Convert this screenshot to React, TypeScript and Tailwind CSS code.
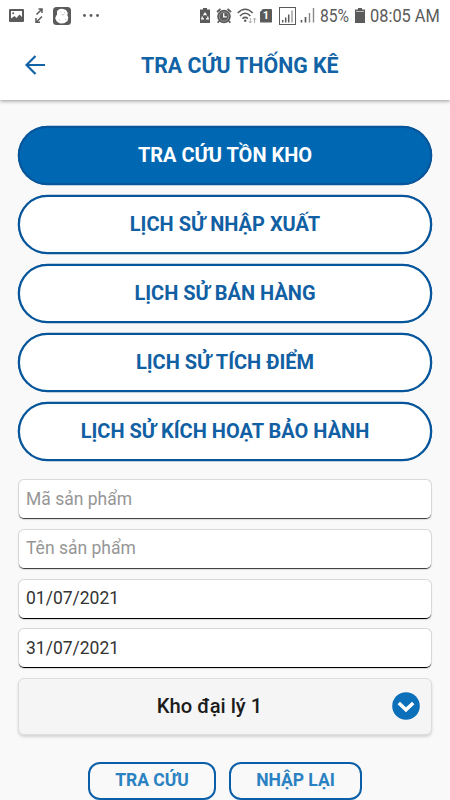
import React, { useState } from 'react';

const MENU_ITEMS = [
  'TRA CỨU TỒN KHO',
  'LỊCH SỬ NHẬP XUẤT',
  'LỊCH SỬ BÁN HÀNG',
  'LỊCH SỬ TÍCH ĐIỂM',
  'LỊCH SỬ KÍCH HOẠT BẢO HÀNH',
];

// Android status bar: notifications on the left, system icons on the right
function StatusBar() {
  return (
    <div className="flex h-[31px] items-center text-[#5b5b5b]">
      <svg className="ml-[9px] h-[13px] w-[15px] shrink-0" viewBox="0 0 15 13">
        <rect width="15" height="13" rx="1" fill="currentColor" />
        <path d="M2 2h11v6L10.5 5.5 7.5 9 5.5 7 2 9.5z" fill="#fff" />
        <circle cx="4.2" cy="4.2" r="1" fill="currentColor" />
      </svg>
      <svg className="ml-[11px] h-4 w-2 shrink-0" viewBox="0 0 8 16" fill="none" stroke="currentColor" strokeWidth="1.5">
        <path d="M1.5 6.5 7 1M3.5 1H7v4M7 8.5 1.5 14M1 10v4.2h4" />
      </svg>
      <svg className="ml-[10px] h-[18px] w-[18px] shrink-0" viewBox="0 0 18 18">
        <rect width="18" height="18" rx="3.5" fill="currentColor" />
        <path d="M4 4 6.5 2l3-.3L13 3l1.8 3-.5 2.2 1 2.3-.8 3.5-3.3 2.3-4 .2L4 14.8 2.2 11.5 3 9 4 7.7z" fill="#fff" />
        <path d="M7.5 4.8h.8M11 5.5h1M8.5 7.5q1.5 1 3-.2M6 12.5l1 .8M12 13l1-.8" fill="none" stroke="#999" strokeWidth=".6" />
      </svg>
      <svg className="ml-[12px] h-[3px] w-4 shrink-0" viewBox="0 0 16 3" fill="currentColor">
        <circle cx="1.5" cy="1.5" r="1.4" />
        <circle cx="8" cy="1.5" r="1.4" />
        <circle cx="14.5" cy="1.5" r="1.4" />
      </svg>

      <svg className="ml-[101px] h-[15px] w-[10px] shrink-0" viewBox="0 0 10 15">
        <path d="M3 0h4v1.5h3V15H0V1.5h3z" fill="currentColor" />
        <path d="m3.5 7.3 1.5-2.3 1.5 2.3M7.5 8.5l.8 2.3H6M4 10.8H1.7l.8-2.3" fill="none" stroke="#fff" strokeWidth="1.2" />
      </svg>
      <svg className="ml-[6px] h-4 w-4 shrink-0" viewBox="0 0 16 16">
        <circle cx="8" cy="8.5" r="6.8" fill="currentColor" />
        <path d="M1 4 4.5 1M15 4l-3.5-3M3 13l-1.2 1.8M13 13l1.2 1.8" stroke="currentColor" strokeWidth="1.8" />
        <circle cx="8" cy="8.5" r="4.6" fill="none" stroke="#fff" strokeWidth=".35" />
        <path d="M7.7 5.3v3.6h3" fill="none" stroke="#fff" strokeWidth="1.3" />
      </svg>
      <svg className="ml-[5px] h-[16px] w-5 shrink-0" viewBox="0 0 20 16" fill="none" stroke="currentColor" strokeWidth="1.5">
        <path d="M.7 5Q8.2-2.4 15.7 5M3 8Q8.2 2.7 13.4 8M5.5 10.6q2.7-2.4 5.4 0" />
        <circle cx="8.2" cy="12.8" r="1.2" fill="currentColor" stroke="none" />
        <path d="M13.3 10v5M11.8 13.4l1.5 1.6 1.5-1.6M17.6 15v-5M16.1 11.6l1.5-1.6 1.5 1.6" stroke="#aaa" strokeWidth="1" />
      </svg>
      <div className="ml-[3px] flex h-[14px] w-3 shrink-0 items-center justify-center rounded-[1px] bg-[#5b5b5b] text-[11px] font-bold leading-none text-white [clip-path:polygon(28%_0,100%_0,100%_100%,0_100%,0_25%)]">
        1
      </div>
      <svg className="ml-[7px] h-[18px] w-[17px] shrink-0" viewBox="0 0 17 18" fill="none" stroke="currentColor">
        <rect x=".5" y=".5" width="16" height="17" strokeWidth="1" />
        <path d="M3.7 15.5V13M6.7 15.5v-5M9.7 15.5V7.5" strokeWidth="1.5" />
        <path d="M13 15.5V3.5" strokeWidth="1.2" stroke="#888" />
      </svg>
      <svg className="ml-[4px] h-[15px] w-[15px] shrink-0" viewBox="0 0 15 15" fill="none" stroke="currentColor">
        <path d="M1.5 14.5V12M5.5 14.5V9" strokeWidth="1.7" />
        <path d="M9.5 14.5V5M13.5 14.5V0" strokeWidth="1.4" stroke="#888" />
      </svg>
      <span className="ml-[5px] w-[31px] shrink-0 origin-left scale-x-[0.87] whitespace-nowrap text-[18px] leading-none">85%</span>
      <svg className="ml-[4px] h-[15px] w-[10px] shrink-0" viewBox="0 0 10 15">
        <path d="M3 0h4v1.5h3V15H0V1.5h3z" fill="currentColor" />
        <path d="M1 3.5h8" stroke="#bbb" strokeWidth="1" />
      </svg>
      <span className="ml-[5px] shrink-0 origin-left scale-x-[0.91] whitespace-nowrap text-[18px] leading-none">08:05 AM</span>
    </div>
  );
}

function Header() {
  return (
    <header className="relative z-10 h-[100px] bg-white shadow-[0_1px_4px_rgba(0,0,0,0.4)]">
      <StatusBar />
      <div className="flex h-[69px] items-center pl-[25px]">
        <svg className="-mt-[2px] h-5 w-5 shrink-0" viewBox="0 0 20 20" fill="none" stroke="#1163a5" strokeWidth="2.2">
          <path d="M20 10H2M10.5 1 1.5 10l9 9" />
        </svg>
        <h1 className="ml-[96px] whitespace-nowrap pt-px text-[21.3px] font-bold text-[#1163a5]">TRA CỨU THỐNG KÊ</h1>
      </div>
    </header>
  );
}

interface TextFieldProps {
  value: string;
  placeholder?: string;
  onChange: (value: string) => void;
}

function TextField({ value, placeholder, onChange }: TextFieldProps) {
  return (
    <div className="h-[40px] rounded-[6px] border border-b-0 border-[#d8d8d8] bg-white shadow-[0_1px_1px_rgba(0,0,0,0.12)]">
      <input
        className={`block h-[39px] w-full rounded-[5px] border-b px-[7px] pb-px text-[17.5px] outline-none placeholder:text-[#969696] ${
          placeholder ? 'border-[#444]' : 'border-black'
        } text-[#333]`}
        value={value}
        placeholder={placeholder}
        onChange={(e) => onChange(e.target.value)}
      />
    </div>
  );
}

export default function App() {
  const [active, setActive] = useState(0);
  const [code, setCode] = useState('');
  const [name, setName] = useState('');
  const [from, setFrom] = useState('01/07/2021');
  const [to, setTo] = useState('31/07/2021');

  return (
    <div className="h-[800px] w-[450px] overflow-hidden bg-[#f9f9f9] font-['Roboto',sans-serif]">
      <Header />

      <main className="px-[18px] pt-[26px]">
        {/* Report types */}
        <div className="flex flex-col gap-[10px]">
          {MENU_ITEMS.map((item, i) => (
            <button
              key={item}
              onClick={() => setActive(i)}
              className={`h-[59px] rounded-full border-2 border-[#07569b] pb-[2px] text-[20px] font-bold shadow-[0_0_0_0.3px_#07569b] ${
                i === active ? 'bg-[#0068b3] text-white' : 'bg-white text-[#1160a3]'
              }`}
            >
              {item}
            </button>
          ))}
        </div>

        {/* Filters */}
        <div className="mt-[18px] flex flex-col gap-[9.8px]">
          <TextField value={code} placeholder="Mã sản phẩm" onChange={setCode} />
          <TextField value={name} placeholder="Tên sản phẩm" onChange={setName} />
          <TextField value={from} onChange={setFrom} />
          <TextField value={to} onChange={setTo} />
          <button className="flex h-[57px] items-center rounded-[6px] border border-[#ddd] bg-[#f5f5f5] pb-px pr-[11px] shadow-[0_2px_3px_rgba(0,0,0,0.15)]">
            <span className="flex-1 pl-[8px] text-[20.2px] font-medium text-[#1c1c1c]">Kho đại lý 1</span>
            <svg className="h-7 w-7" viewBox="0 0 28 28">
              <circle cx="14" cy="14" r="13.8" fill="#0b6fba" />
              <path d="m6.8 11 7.2 6.7 7.2-6.7" fill="none" stroke="#fff" strokeWidth="3.6" />
            </svg>
          </button>
        </div>

        {/* Actions */}
        <div className="mt-[27px] flex gap-[13px] pl-[70px]">
          <button className="h-[37.5px] w-[128px] rounded-[12px] border-2 border-[#0a5fa8] pb-px text-[17.5px] font-bold text-[#2a82c2]">
            TRA CỨU
          </button>
          <button className="h-[37.5px] w-[133px] rounded-[12px] border-2 border-[#0a5fa8] pb-px text-[17.5px] font-bold text-[#2a82c2]">
            NHẬP LẠI
          </button>
        </div>
      </main>
    </div>
  );
}
